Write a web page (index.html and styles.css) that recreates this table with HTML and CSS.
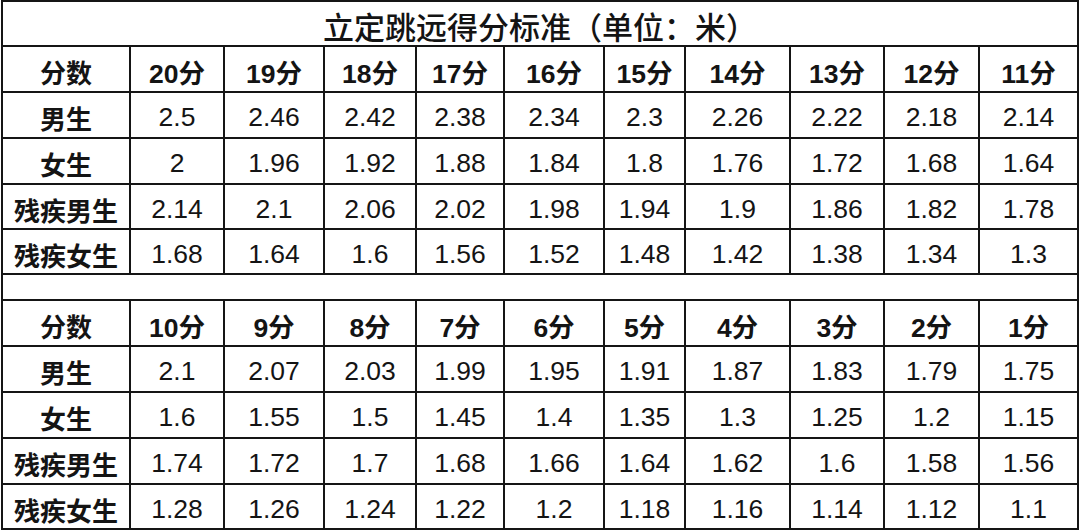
FILE: index.html
```html
<!DOCTYPE html>
<html lang="zh">
<head>
<meta charset="utf-8">
<link rel="stylesheet" href="styles.css">
<title>立定跳远得分标准</title>
</head>
<body>
<div class="sheet">
  <div class="title">立定跳远得分标准（单位：米）</div>

  <div class="c lab">分数</div><div class="c hd">20分</div><div class="c hd">19分</div><div class="c hd">18分</div><div class="c hd">17分</div><div class="c hd">16分</div><div class="c hd">15分</div><div class="c hd">14分</div><div class="c hd">13分</div><div class="c hd">12分</div><div class="c hd">11分</div>
  <div class="c lab">男生</div><div class="c">2.5</div><div class="c">2.46</div><div class="c">2.42</div><div class="c">2.38</div><div class="c">2.34</div><div class="c">2.3</div><div class="c">2.26</div><div class="c">2.22</div><div class="c">2.18</div><div class="c">2.14</div>
  <div class="c lab">女生</div><div class="c">2</div><div class="c">1.96</div><div class="c">1.92</div><div class="c">1.88</div><div class="c">1.84</div><div class="c">1.8</div><div class="c">1.76</div><div class="c">1.72</div><div class="c">1.68</div><div class="c">1.64</div>
  <div class="c lab">残疾男生</div><div class="c">2.14</div><div class="c">2.1</div><div class="c">2.06</div><div class="c">2.02</div><div class="c">1.98</div><div class="c">1.94</div><div class="c">1.9</div><div class="c">1.86</div><div class="c">1.82</div><div class="c">1.78</div>
  <div class="c lab">残疾女生</div><div class="c">1.68</div><div class="c">1.64</div><div class="c">1.6</div><div class="c">1.56</div><div class="c">1.52</div><div class="c">1.48</div><div class="c">1.42</div><div class="c">1.38</div><div class="c">1.34</div><div class="c">1.3</div>

  <div class="blank"></div>

  <div class="c lab">分数</div><div class="c hd">10分</div><div class="c hd">9分</div><div class="c hd">8分</div><div class="c hd">7分</div><div class="c hd">6分</div><div class="c hd">5分</div><div class="c hd">4分</div><div class="c hd">3分</div><div class="c hd">2分</div><div class="c hd">1分</div>
  <div class="c lab">男生</div><div class="c">2.1</div><div class="c">2.07</div><div class="c">2.03</div><div class="c">1.99</div><div class="c">1.95</div><div class="c">1.91</div><div class="c">1.87</div><div class="c">1.83</div><div class="c">1.79</div><div class="c">1.75</div>
  <div class="c lab">女生</div><div class="c">1.6</div><div class="c">1.55</div><div class="c">1.5</div><div class="c">1.45</div><div class="c">1.4</div><div class="c">1.35</div><div class="c">1.3</div><div class="c">1.25</div><div class="c">1.2</div><div class="c">1.15</div>
  <div class="c lab">残疾男生</div><div class="c">1.74</div><div class="c">1.72</div><div class="c">1.7</div><div class="c">1.68</div><div class="c">1.66</div><div class="c">1.64</div><div class="c">1.62</div><div class="c">1.6</div><div class="c">1.58</div><div class="c">1.56</div>
  <div class="c lab">残疾女生</div><div class="c">1.28</div><div class="c">1.26</div><div class="c">1.24</div><div class="c">1.22</div><div class="c">1.2</div><div class="c">1.18</div><div class="c">1.16</div><div class="c">1.14</div><div class="c">1.12</div><div class="c">1.1</div>
</div>
</body>
</html>
```

FILE: styles.css
```css
html, body {
  margin: 0;
  padding: 0;
  background: #ffffff;
}

.sheet {
  margin-left: 1px;
  width: 1078px;
  box-sizing: border-box;
  padding: 2px;
  background: #151515;
  display: grid;
  grid-template-columns: 126px 92px 98px 90px 86px 98px 79px 103px 92px 93px 97px;
  grid-template-rows: 43px 44px 44px 44px 43px 43px 24px 44px 44px 44px 44px 43px;
  gap: 2px;
  font-family: "Liberation Sans", "Noto Sans CJK SC", sans-serif;
  color: #141414;
}

.title {
  grid-column: 1 / -1;
  background: #ffffff;
  display: flex;
  align-items: center;
  justify-content: center;
  font-family: "Noto Sans CJK SC", sans-serif;
  font-size: 31px;
  font-weight: 500;
  padding-left: 0;
  padding-top: 4px;
}

.blank {
  grid-column: 1 / -1;
  background: #ffffff;
}

.c {
  background: #ffffff;
  display: flex;
  align-items: center;
  justify-content: center;
  font-size: 26.5px;
  padding-top: 5px;
}

.lab {
  font-family: "Noto Sans CJK SC", sans-serif;
  font-weight: 700;
  font-size: 26px;
}

.hd {
  font-weight: 700;
  font-family: "Liberation Sans", "Noto Sans CJK SC", sans-serif;
}
```
